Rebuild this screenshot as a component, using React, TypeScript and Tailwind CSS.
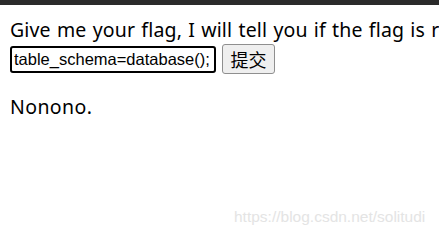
export default function App() {
  return (
    <div className="relative h-[232px] w-[439px] overflow-hidden bg-white">
      <div className="h-[5px] bg-[#2b2b2b]" />
      <div className="px-[10px] pt-[13px] font-['Noto_Sans',sans-serif] text-black">
        <p className="whitespace-nowrap text-[19.5px] leading-[24px] tracking-[0.15px] [word-spacing:1px]">
          Give me your flag, I will tell you if the flag is right.
        </p>
        <form className="mt-[2px] flex items-center gap-[6px]">
          <input
            type="text"
            defaultValue="table_schema=database();"
            className="h-[27px] w-[206px] rounded-[3px] border-2 border-black px-[2px] font-['Liberation_Sans',sans-serif] text-[16.5px] outline-none"
          />
          <button
            type="button"
            className="h-[30px] w-[53px] rounded-[3px] border border-[#8f8f8f] bg-[#efefef] font-['Noto_Sans_CJK_SC',sans-serif] text-[18px] leading-none"
          >
            提交
          </button>
        </form>
        <p className="mt-[21px] text-[19.5px] leading-[24px] tracking-[0.4px]">Nonono.</p>
      </div>
      <div className="absolute left-[234px] top-[205px] font-['Liberation_Sans',sans-serif] text-[15.5px] text-[#e4e4e4]">
        https://blog.csdn.net/solitudi
      </div>
    </div>
  );
}
